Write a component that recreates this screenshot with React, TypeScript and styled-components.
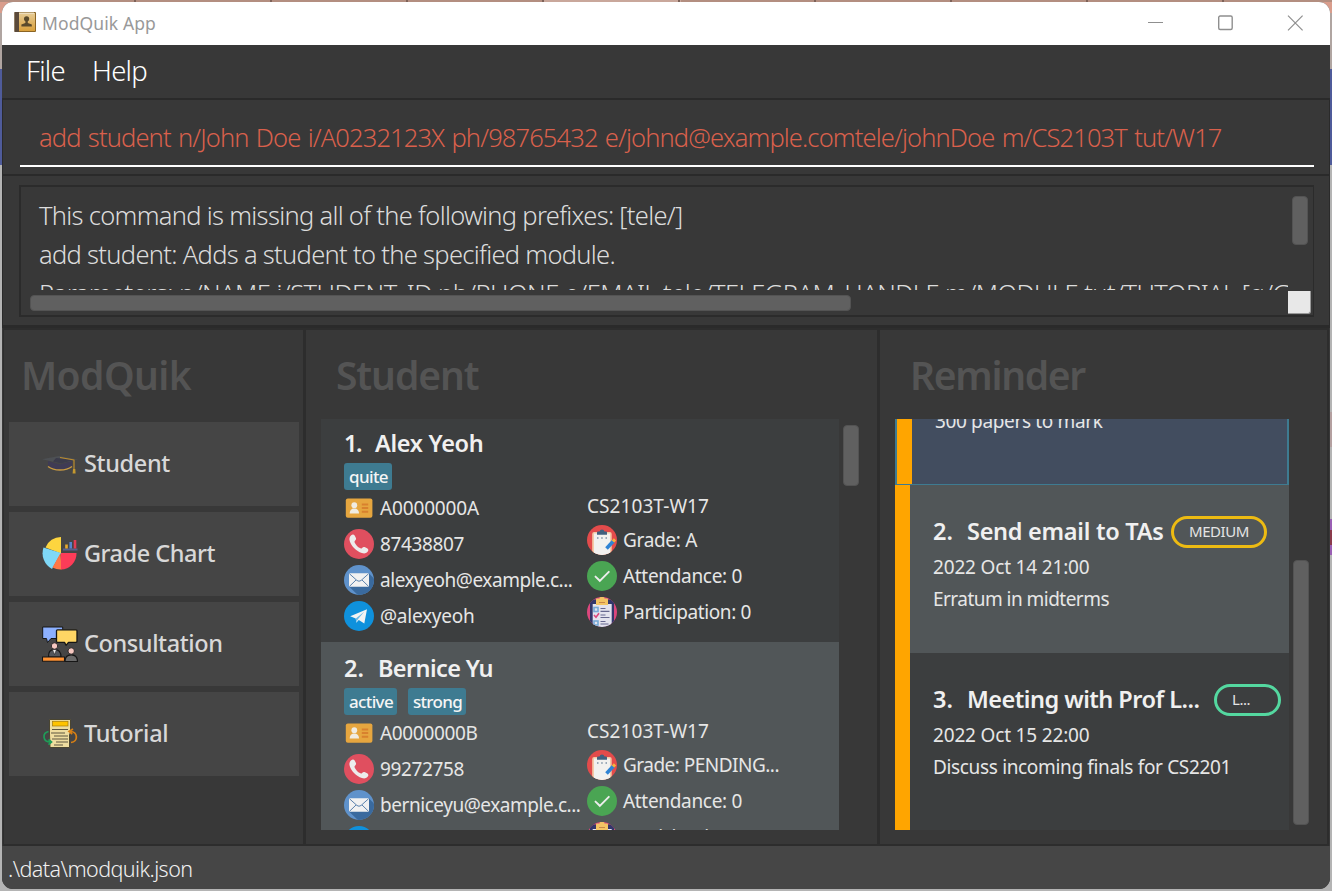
import React, { useLayoutEffect, useRef, useState } from "react";
import styled, { createGlobalStyle, css } from "styled-components";

const GlobalStyle = createGlobalStyle`
  * { box-sizing: border-box; }
  html, body { margin: 0; padding: 0; }
  body {
    width: 1332px;
    height: 891px;
    overflow: hidden;
    font-family: "Noto Sans", "Open Sans", sans-serif;
  }
`;

const Desktop = styled.div`
  width: 1332px;
  height: 891px;
  padding: 2px;
  background:
    repeating-linear-gradient(90deg, transparent 0 134px, #7d6258 134px 136px) 0 0 / 100% 2px no-repeat,
    linear-gradient(#c9a79b, #c9a79b) 543px 0 / 138px 2px no-repeat,
    linear-gradient(#b38e80, #b38e80) 0 0 / 100% 2px no-repeat,
    linear-gradient(180deg, transparent 0 412px, #b4a0a0 412px 447px, transparent 447px 519px, #9a5fb4 519px 530px, #8a3a4c 530px 545px, #9a5fb4 545px 555px, transparent 555px) 100% 0 / 2px 100% no-repeat,
    linear-gradient(180deg, #d99d8c 0 13px, #b0a5a1 13px 69px, #4f5b9a 69px 165px, #b4b4b4 165px) 0 0 / 100% 100%;
`;

const Window = styled.div`
  width: 1328px;
  height: 887px;
  display: flex;
  flex-direction: column;
  border-radius: 11px;
  overflow: hidden;
  background: #383838;
`;

const TitleBar = styled.header`
  flex: 0 0 43px;
  display: flex;
  align-items: center;
  padding: 0 24px 0 12px;
  background: #ffffff;
`;

const TitleIcon = styled.div`
  width: 28px;
  height: 24px;
  display: flex;
  margin-top: -2px;
`;

const WindowButtons = styled.div`
  margin-left: auto;
  display: flex;
  gap: 50px;
  margin-top: -2px;
  svg { display: block; }
`;

const MenuBar = styled.nav`
  flex: 0 0 53px;
  display: flex;
  align-items: center;
  gap: 27px;
  padding: 0 0 2px 24px;
`;

const CommandPane = styled.section`
  flex: 0 0 78px;
  padding: 17px 15px 0 17px;
  border: 1px solid #2a2a2a;
  border-top-width: 2px;
  border-bottom-width: 2px;
`;

const CommandField = styled.div`
  height: 50px;
  padding: 0 0 6px 19px;
  display: flex;
  align-items: center;
  border-bottom: 2px solid #ffffff;
  border-image: linear-gradient(#8c8c8c 0 50%, #ffffff 50%) 2;
`;

const ResultPane = styled.section`
  flex: 0 0 152px;
  padding: 9px 15px 0 16px;
  border: 1px solid #2a2a2a;
  border-width: 0 1px 3px;
`;

const ResultBox = styled.div`
  height: 132px;
  display: grid;
  grid-template-columns: 1fr 23px;
  grid-template-rows: 103px 24px;
  padding: 1px 2px 1px 8px;
  border: 2px solid #2b2b2b;
  border-right-width: 1px;
`;

const ResultText = styled.div`
  overflow: hidden;
  padding: 8px 0 0 10px;
  height: 102px;
`;

const ResultLine = styled.div`
  height: 39px;
  display: flex;
  align-items: center;
`;

const Corner = styled.div`
  width: 23px;
  height: 23px;
  background: #e8e8e8;
  border-bottom: 1px solid #999;
  border-right: 1px solid #999;
  border-radius: 0 0 3px 0;
`;

const Thumb = styled.div<{ $w: number; $h: number; $top?: number; $left?: number }>`
  flex: none;
  width: ${(p) => p.$w}px;
  height: ${(p) => p.$h}px;
  margin-top: ${(p) => p.$top ?? 0}px;
  margin-left: ${(p) => p.$left ?? 0}px;
  background: #606060;
  border: 1px solid #535353;
  border-radius: 4px;
`;

const Main = styled.main`
  flex: 1;
  min-height: 0;
  display: grid;
  grid-template-columns: 302px 574px 1fr;
  padding: 0 1px;
`;

const Panel = styled.section`
  min-width: 0;
  display: flex;
  flex-direction: column;
  border: 2px solid #2d2d2d;
  border-width: 2px 2px 2px 1px;
`;

const PanelHeading = styled.div<{ $indent: number }>`
  flex: 0 0 89px;
  display: flex;
  align-items: center;
  padding: 1px 0 0 ${(p) => p.$indent}px;
`;

const NavList = styled.div`
  display: flex;
  flex-direction: column;
  gap: 6px;
  padding: 3px 4px 0 5px;
`;

const NavItem = styled.a`
  height: 84px;
  display: flex;
  align-items: center;
  gap: 6px;
  padding-left: 33px;
  background: #454545;
  svg { display: block; }
  span { margin-bottom: 2px; }
`;

const ListRow = styled.div<{ $indent: number }>`
  height: 411px;
  display: flex;
  padding-left: ${(p) => p.$indent}px;
`;

const StudentList = styled.div`
  width: 518px;
  height: 411px;
  overflow: hidden;
`;

const StudentCard = styled.article<{ $alt?: boolean }>`
  height: ${(p) => (p.$alt ? 225 : 223)}px;
  padding: ${(p) => (p.$alt ? 9 : 7)}px 0 0 23px;
  background: ${(p) => (p.$alt ? "#515658" : "#3c3e3f")};
`;

const NameRow = styled.div`
  height: 37px;
  display: flex;
  align-items: center;
  padding-bottom: 2px;
`;

const Ordinal = styled.div<{ $w: number }>`
  width: ${(p) => p.$w}px;
`;

const Tags = styled.div`
  height: 27px;
  display: flex;
  gap: 11px;
`;

const Tag = styled.span`
  height: 27px;
  display: flex;
  align-items: center;
  padding: 1px 4px 0 5px;
  border-radius: 3px;
  background: #3e7b91;
`;

const Details = styled.div`
  display: grid;
  grid-template-columns: 243px 1fr;
`;

const DetailColumn = styled.div`
  display: flex;
  flex-direction: column;
`;

const Detail = styled.div<{ $h?: number }>`
  height: ${(p) => p.$h ?? 36}px;
  display: flex;
  align-items: center;
  gap: 6px;
  svg { display: block; flex: none; }
`;

const ReminderList = styled.div`
  width: 394px;
  height: 411px;
  overflow: hidden;
`;

const ReminderItem = styled.article<{ $h: number; $bg: string }>`
  height: ${(p) => p.$h}px;
  padding: 29px 0 0 23px;
  border-left: 15px solid #ffa500;
  background: ${(p) => p.$bg};
`;

const SelectedReminder = styled.article`
  height: 66px;
  border: 1px solid #3e7b91;
  border-width: 0 2px 1px 2px;
  background: #424d5f;
  display: flex;
`;

const SelectedBody = styled.div`
  flex: 1;
  overflow: hidden;
  border-left: 15px solid #ffa500;
  padding-left: 23px;
  display: flex;
`;

const SelectedText = styled.div`
  height: 28px;
  margin-top: -10px;
`;

const ReminderTitle = styled.div`
  height: 37px;
  display: flex;
  align-items: center;
  padding-bottom: 1px;
  > div, > span:not(:last-child) { margin-bottom: 2px; }
`;

const ReminderLine = styled.div`
  height: 32px;
  display: flex;
  align-items: center;
`;

const Pill = styled.span<{ $w: number; $color: string; $left: number }>`
  flex: none;
  width: ${(p) => p.$w}px;
  height: 32px;
  margin-left: ${(p) => p.$left}px;
  padding-left: 15px;
  display: flex;
  align-items: center;
  border: 3px solid ${(p) => p.$color};
  border-radius: 16px;
`;

const StatusBar = styled.footer`
  flex: 0 0 43px;
  display: flex;
  align-items: center;
  padding: 3px 0 0 6px;
  background: #464646;
`;

type Kind = "title" | "menu" | "command" | "result" | "heading" | "nav" | "name" | "tag" | "body" | "pill" | "status";

const kinds = {
  title: css`font-size: 17.5px; color: #999999;`,
  menu: css`font-size: 27.5px; font-weight: 300; color: #ffffff;`,
  command: css`font-size: 25.5px; font-weight: 300; word-spacing: 1.5px; color: #d9604c;`,
  result: css`font-size: 25.5px; font-weight: 300; color: #dcdcdc;`,
  heading: css`font-size: 39px; font-weight: 600; color: #545454;`,
  nav: css`font-size: 23.5px; font-weight: 500; color: #d8d8d8;`,
  name: css`font-size: 23.5px; font-weight: 600; color: #f0f0f0;`,
  tag: css`font-size: 17px; font-weight: 500; color: #f5f5f5;`,
  body: css`font-size: 19px; font-weight: 400; color: #e6e6e6;`,
  pill: css`font-size: 15px; font-weight: 400; color: #e4e4e4;`,
  status: css`font-size: 21.5px; font-weight: 300; color: #f0f0f0;`,
};

const TextSpan = styled.span<{ $kind: Kind }>`
  display: inline-block;
  white-space: pre;
  line-height: 1.3;
  font-kerning: normal;
  font-variant-ligatures: none;
  ${(p) => kinds[p.$kind]}
`;

/** Text whose letter spacing is adjusted so that it fills the given width. */
function Label({ kind, width, children }: { kind: Kind; width: number; children: string }) {
  const ref = useRef<HTMLSpanElement>(null);
  const [spacing, setSpacing] = useState(0);
  useLayoutEffect(() => {
    if (ref.current) {
      const natural = ref.current.getBoundingClientRect().width;
      setSpacing((width - natural) / children.length);
    }
  }, [width, children]);
  return (
    <TextSpan ref={ref} $kind={kind} style={{ letterSpacing: spacing }}>
      {children}
    </TextSpan>
  );
}

/* ---------- icons ---------- */

const BookIcon = () => (
  <svg width="24" height="22" viewBox="0 0 24 22">
    <defs>
      <linearGradient id="cover" x1="0" y1="0" x2="0" y2="1">
        <stop offset="0" stopColor="#e6cb95" />
        <stop offset="1" stopColor="#d9a03c" />
      </linearGradient>
    </defs>
    <rect x="0.500" y="1" width="21.500" height="20" rx="1" fill="#8b6424" />
    <rect x="0.500" y="1" width="4.500" height="20" fill="#5b4a3b" />
    <rect x="5" y="2" width="16" height="18" fill="url(#cover)" />
    <rect x="5" y="1.600" width="15" height="1" fill="#f3ead6" />
    <circle cx="12.600" cy="7.800" r="2.600" fill="#5a4a2c" />
    <path d="M11.400 9h2.400v3l4 1.600v1.900H7.400v-1.900l4-1.600z" fill="#5a4a2c" />
  </svg>
);

const CapIcon = () => (
  <svg width="36" height="36" viewBox="0 0 36 36">
    <path d="M6 15l12 3.500L30 15v5c-3 3-8 4.500-12 4.500s-9-2-12-4.500z" fill="#3f3b54" />
    <path d="M0 13.300L17 10 36 13.500 19 17.500z" fill="#4d5054" />
    <path d="M14 12l20 1.500L19 17.500l-8-2z" fill="#3b3b4b" />
    <path d="M6 20.500c4 3 8 3.500 12 3.500s9-1.200 12-3.500" fill="none" stroke="#c99b40" strokeWidth="1.500" />
    <path d="M18 11.500l14 2.500v10" fill="none" stroke="#bd8d2e" strokeWidth="1.200" />
    <path d="M31 23h2.300l.3 4.500h-3z" fill="#c4982f" />
  </svg>
);

const ChartIcon = () => (
  <svg width="36" height="36" viewBox="0 0 36 36">
    <path d="M19 17.500L3.500 11.500A16.500 16.500 0 0 1 19 1z" fill="#fdd53f" />
    <path d="M19 17L10 33A18 18 0 0 1 1.500 11.500z" fill="#7fd8f7" />
    <path d="M18.500 17L19.500 33.500a17 17 0 0 1-9-2z" fill="#ff7746" />
    <path d="M19 17h15.500A16 16 0 0 1 19 33.500z" fill="#fd3c58" />
    <path d="M21 13.500h14.500" stroke="#58618f" strokeWidth="2" />
    <path d="M24.500 12.500V8.500" stroke="#e8a92d" strokeWidth="2.600" />
    <path d="M28.700 12.500V6" stroke="#5585cf" strokeWidth="2.600" />
    <path d="M33 12.500V4" stroke="#e23b55" strokeWidth="2.600" />
  </svg>
);

const ConsultIcon = () => (
  <svg width="36" height="36" viewBox="0 0 36 36" stroke="#161616" strokeLinejoin="round">
    <path d="M.700 1h20v11.500H9l-3.500 4-1-4H.700z" fill="#8cb0ff" strokeWidth="1" />
    <path d="M15.500 3.800h18.500q1 0 1 1v10.500q0 1-1 1h-7.500l-2.500 3-1.500-3h-7q-1 0-1-1V4.800q0-1 1-1z" fill="#ffd664" strokeWidth="1.300" />
    <path d="M6.500 31c-.2-5 1.500-7.500 6-7.500s6.500 2.500 6.500 7.500z" fill="#52565c" strokeWidth="1.200" />
    <path d="M10.500 23.500l2 5 2-5z" fill="#eee" strokeWidth=".5" />
    <circle cx="12.500" cy="20" r="3.200" fill="#f6c8c1" strokeWidth=".8" />
    <path d="M.500 31h22v4.300H.500z" fill="#ff9233" strokeWidth="1.100" />
    <path d="M23 35.500c0-4.500 2-6.700 6.200-6.700s6.300 2.200 6.300 6.700z" fill="#6a6a6a" strokeWidth="1.200" />
    <circle cx="29.200" cy="25" r="3.200" fill="#f6c8c1" strokeWidth=".8" />
  </svg>
);

const TutorialIcon = () => (
  <svg width="36" height="36" viewBox="0 0 36 36" fill="none">
    <path d="M7.500 3.500h21v13l-1 2V31.500H8L7.500 18z" fill="#eedd9f" stroke="#4a4530" strokeWidth="1" />
    <rect x="10.500" y="5.300" width="15.500" height="4.700" fill="#ffc400" stroke="#a37b0c" strokeWidth=".7" />
    <path d="M10 13.500h16M9 17h14M12 20h14M10 23h16M14 26h12M12 29h9" stroke="#5c5641" strokeWidth="1.100" />
    <path d="M6.500 15.500C0 17 .500 26 8.500 26M6.500 23.500l3 2.500-3 2.600" stroke="#1f9d58" strokeWidth="1.700" />
    <path d="M29 26.500c7.500-.500 7-11-.5-11M31 13l-4 2.400 3.200 2.800" stroke="#d98014" strokeWidth="1.700" />
  </svg>
);

const IdIcon = () => (
  <svg width="30" height="30" viewBox="0 0 30 30">
    <rect x="1.800" y="5.500" width="26.600" height="19.200" rx="2" fill="#e6a63f" />
    <circle cx="10.300" cy="12.200" r="2.900" fill="#f0ece2" />
    <path d="M5.700 20.500c0-3.500 2-5 4.600-5s4.700 1.500 4.700 5z" fill="#f0ece2" />
    <path d="M17.800 11.500h6.400M17.800 15h6.400M17.800 18.700h6.400" stroke="#d8812e" strokeWidth="2" />
  </svg>
);

const PhoneIcon = () => (
  <svg width="30" height="30" viewBox="0 0 30 30">
    <circle cx="15" cy="15" r="15" fill="#e04f5f" />
    <path d="M7.200 6.300c1.300-1.200 2.800-1 3.600.500l1 2c.6 1.200.2 2-.8 2.900-.7.700-.6 1.300-.1 2.200 1.200 2.200 2.800 3.900 5 5.200.9.500 1.500.5 2.200-.2.900-1 1.800-1.300 3-.7l2 1.100c1.400.8 1.700 2.200.5 3.500-1.600 1.700-3.500 2-5.700 1.200C12 21.900 7.600 17.300 5.800 12.200 5 10 5.400 7.900 7.200 6.300z" fill="#ececec" />
  </svg>
);

const MailIcon = () => (
  <svg width="30" height="30" viewBox="0 0 30 30">
    <clipPath id="mailClip"><circle cx="15" cy="15" r="15" /></clipPath>
    <g clipPath="url(#mailClip)">
      <rect width="30" height="30" fill="#5f92cb" />
      <path d="M25 8.500l8 8V34H18L5 21.500z" fill="#3a6a9e" />
    </g>
    <rect x="5" y="8.300" width="20" height="13.500" rx="1" fill="#f1f1f1" />
    <path d="M5.500 8.800l7.500 6.700q2 1.500 4 0l7.500-6.700M5.500 21.300l6.500-6.300M24.500 21.300L18 15" fill="none" stroke="#5b82ad" strokeWidth="1" />
  </svg>
);

const TelegramIcon = () => (
  <svg width="30" height="30" viewBox="0 0 30 30">
    <circle cx="15" cy="15" r="15" fill="#0f91dc" />
    <path d="M6.200 15.200L23 8.300 20.300 22.600 14.800 18.900 12.300 21.800 11.700 17.400z" fill="#f3f3f3" />
    <path d="M11.900 17.500l8.300-6.700-6.300 7.500-1.500 3z" fill="#0f91dc" opacity=".6" />
  </svg>
);

const GradeIcon = () => (
  <svg width="30" height="30" viewBox="0 0 30 30">
    <clipPath id="gradeClip"><circle cx="15" cy="15" r="15" /></clipPath>
    <g clipPath="url(#gradeClip)">
      <rect width="30" height="30" fill="#e34b4b" />
      <rect x="5.200" y="7" width="19.500" height="26" rx="2" fill="#f4cba8" />
      <rect x="7" y="8.500" width="16" height="26" fill="#f2f1ef" />
      <path d="M10 9.800V7.500q0-1 1-1h1.500a2.600 2.600 0 0 1 5 0H19q1 0 1 1v2.300z" fill="#40607f" />
      <path d="M10 13h1.500M14.200 13h1.500M18.500 13H20" stroke="#9aa9b8" strokeWidth="1.800" />
      <path d="M19.500 23.500L26.500 16" stroke="#2f83d4" strokeWidth="3.600" />
      <path d="M26 16.500l2-2.100" stroke="#f5b43c" strokeWidth="3.200" />
    </g>
  </svg>
);

const CheckIcon = () => (
  <svg width="30" height="30" viewBox="0 0 30 30">
    <circle cx="15" cy="15" r="15" fill="#4aa553" />
    <path d="M8.500 15.600l4.300 4.200 9-9" fill="none" stroke="#ededed" strokeWidth="1.900" strokeLinecap="round" />
  </svg>
);

const ParticipationIcon = () => (
  <svg width="30" height="30" viewBox="0 0 30 30">
    <clipPath id="partClip"><circle cx="15" cy="15" r="15" /></clipPath>
    <g clipPath="url(#partClip)">
      <rect width="30" height="30" fill="#dc477d" />
      <rect x="3" y="2.500" width="24" height="30" rx="2" fill="#33376b" />
      <rect x="5.700" y="7" width="19" height="26" fill="#e3e3ee" />
      <path d="M9 8V2.500q0-1 1-1h2.500a2.500 2.500 0 0 1 5 0H20q1 0 1 1V8z" fill="#f3c464" />
      <path d="M12 5.500h6" stroke="#c9884a" strokeWidth="1" />
      <rect x="7" y="10.500" width="4" height="4" fill="none" stroke="#76a9d6" strokeWidth="1.600" />
      <path d="M7 18l2 2.300 3-4" fill="none" stroke="#dc477d" strokeWidth="1.600" />
      <rect x="7" y="24" width="4" height="4" fill="none" stroke="#76a9d6" strokeWidth="1.600" />
      <path d="M13.500 11.500h5M13.500 14.300h9M13.500 18h5M13.500 20.500h9M13.500 24.500h5M13.500 27h8" stroke="#666890" strokeWidth="1.200" />
    </g>
  </svg>
);

/* ---------- data ---------- */

type Txt = [string, number];

interface Student {
  ordinal: Txt;
  ordinalBox: number;
  name: Txt;
  tags: Txt[];
  id: Txt;
  phone: Txt;
  email: Txt;
  handle: Txt;
  grade: Txt;
}

const students: Student[] = [
  {
    ordinal: ["1.", 17], ordinalBox: 31, name: ["Alex Yeoh", 108.5],
    tags: [["quite", 39]],
    id: ["A0000000A", 99], phone: ["87438807", 84],
    email: ["alexyeoh@example.c...", 192.5], handle: ["@alexyeoh", 94.5],
    grade: ["Grade: A", 74],
  },
  {
    ordinal: ["2.", 20], ordinalBox: 34, name: ["Bernice Yu", 115],
    tags: [["active", 44], ["strong", 49]],
    id: ["A0000000B", 97.5], phone: ["99272758", 84],
    email: ["berniceyu@example.c...", 200.5], handle: ["@berniceyu", 103],
    grade: ["Grade: PENDING...", 156],
  },
];

const navItems: { text: Txt; icon: React.ReactNode }[] = [
  { text: ["Student", 86], icon: <CapIcon /> },
  { text: ["Grade Chart", 131], icon: <ChartIcon /> },
  { text: ["Consultation", 138.5], icon: <ConsultIcon /> },
  { text: ["Tutorial", 84.5], icon: <TutorialIcon /> },
];

const Line = ({ icon, text, h }: { icon?: React.ReactNode; text: Txt; h?: number }) => (
  <Detail $h={h}>
    {icon}
    <Label kind="body" width={text[1]}>{text[0]}</Label>
  </Detail>
);

export default function App() {
  return (
    <Desktop>
      <GlobalStyle />
      <Window>
        <TitleBar>
          <TitleIcon><BookIcon /></TitleIcon>
          <Label kind="title" width={114}>ModQuik App</Label>
          <WindowButtons>
            <svg width="21" height="16" viewBox="0 0 21 16"><path d="M1 7.500h15" stroke="#8f8f8f" /></svg>
            <svg width="16" height="16" viewBox="-1 0 16 16"><rect x="-1" y="1" width="13.500" height="13.500" rx="1.500" transform="translate(.7 0)" fill="none" stroke="#8f8f8f" strokeWidth="1.400" /></svg>
            <svg width="22" height="16" viewBox="0 0 22 16"><path d="M4 .700l14.600 14.600M18.600.700L4 15.300" stroke="#8f8f8f" strokeWidth="1.200" /></svg>
          </WindowButtons>
        </TitleBar>
        <MenuBar>
          <Label kind="menu" width={39}>File</Label>
          <Label kind="menu" width={55}>Help</Label>
        </MenuBar>
        <CommandPane>
          <CommandField>
            <Label kind="command" width={1182.5}>
              add student n/John Doe i/A0232123X ph/98765432 e/johnd@example.comtele/johnDoe m/CS2103T tut/W17
            </Label>
          </CommandField>
        </CommandPane>
        <ResultPane>
          <ResultBox>
            <ResultText>
              <ResultLine>
                <Label kind="result" width={643.5}>This command is missing all of the following prefixes: [tele/]</Label>
              </ResultLine>
              <ResultLine>
                <Label kind="result" width={576}>add student: Adds a student to the specified module.</Label>
              </ResultLine>
              <ResultLine>
                <Label kind="result" width={1320}>
                  Parameters: n/NAME i/STUDENT_ID ph/PHONE e/EMAIL tele/TELEGRAM_HANDLE m/MODULE tut/TUTORIAL [g/GRADE]
                </Label>
              </ResultLine>
            </ResultText>
            <Thumb $w={16} $h={49} $top={8} $left={4} />
            <Thumb $w={821} $h={16} $top={4} $left={1} />
            <Corner />
          </ResultBox>
        </ResultPane>
        <Main>
          <Panel>
            <PanelHeading $indent={17}><Label kind="heading" width={170}>ModQuik</Label></PanelHeading>
            <NavList>
              {navItems.map((n) => (
                <NavItem key={n.text[0]}>
                  {n.icon}
                  <Label kind="nav" width={n.text[1]}>{n.text[0]}</Label>
                </NavItem>
              ))}
            </NavList>
          </Panel>
          <Panel>
            <PanelHeading $indent={30}><Label kind="heading" width={142.5}>Student</Label></PanelHeading>
            <ListRow $indent={15}>
              <StudentList>
                {students.map((s, i) => (
                  <StudentCard key={s.name[0]} $alt={i % 2 === 1}>
                    <NameRow>
                      <Ordinal $w={s.ordinalBox}><Label kind="name" width={s.ordinal[1]}>{s.ordinal[0]}</Label></Ordinal>
                      <Label kind="name" width={s.name[1]}>{s.name[0]}</Label>
                    </NameRow>
                    <Tags>
                      {s.tags.map((t) => (
                        <Tag key={t[0]}><Label kind="tag" width={t[1]}>{t[0]}</Label></Tag>
                      ))}
                    </Tags>
                    <Details>
                      <DetailColumn>
                        <Line icon={<IdIcon />} text={s.id} />
                        <Line icon={<PhoneIcon />} text={s.phone} />
                        <Line icon={<MailIcon />} text={s.email} />
                        <Line icon={<TelegramIcon />} text={s.handle} />
                      </DetailColumn>
                      <DetailColumn>
                        <Line text={["CS2103T-W17", 122]} h={32} />
                        <Line icon={<GradeIcon />} text={s.grade} />
                        <Line icon={<CheckIcon />} text={["Attendance: 0", 119]} />
                        <Line icon={<ParticipationIcon />} text={["Participation: 0", 128]} />
                      </DetailColumn>
                    </Details>
                  </StudentCard>
                ))}
              </StudentList>
              <Thumb $w={16} $h={61} $top={6} $left={4} />
            </ListRow>
          </Panel>
          <Panel>
            <PanelHeading $indent={30}><Label kind="heading" width={175}>Reminder</Label></PanelHeading>
            <ListRow $indent={15}>
              <ReminderList>
                <SelectedReminder>
                  <SelectedBody>
                    <SelectedText><Label kind="body" width={167.5}>300 papers to mark</Label></SelectedText>
                  </SelectedBody>
                </SelectedReminder>
                <ReminderItem $h={168} $bg="#515658">
                  <ReminderTitle>
                    <Ordinal $w={34}><Label kind="name" width={20}>2.</Label></Ordinal>
                    <Label kind="name" width={196.5}>Send email to TAs</Label>
                    <Pill $w={96} $color="#edbb12" $left={7.5}><Label kind="pill" width={60}>MEDIUM</Label></Pill>
                  </ReminderTitle>
                  <ReminderLine><Label kind="body" width={156.5}>2022 Oct 14 21:00</Label></ReminderLine>
                  <ReminderLine><Label kind="body" width={176}>Erratum in midterms</Label></ReminderLine>
                </ReminderItem>
                <ReminderItem $h={177} $bg="#3c3e3f">
                  <ReminderTitle>
                    <Ordinal $w={34}><Label kind="name" width={20}>3.</Label></Ordinal>
                    <Label kind="name" width={232.5}>Meeting with Prof L...</Label>
                    <Pill $w={67} $color="#54d8a0" $left={14.5}><Label kind="pill" width={18}>L...</Label></Pill>
                  </ReminderTitle>
                  <ReminderLine><Label kind="body" width={156.5}>2022 Oct 15 22:00</Label></ReminderLine>
                  <ReminderLine><Label kind="body" width={298}>Discuss incoming finals for CS2201</Label></ReminderLine>
                </ReminderItem>
              </ReminderList>
              <Thumb $w={16} $h={265} $top={141} $left={4} />
            </ListRow>
          </Panel>
        </Main>
        <StatusBar><Label kind="status" width={184.5}>{".\\data\\modquik.json"}</Label></StatusBar>
      </Window>
    </Desktop>
  );
}
